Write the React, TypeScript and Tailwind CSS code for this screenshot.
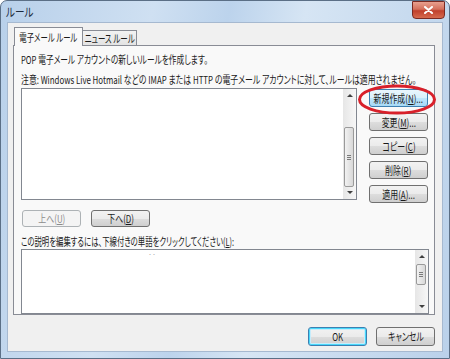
import React from "react";

const font = { fontFamily: '"Meiryo UI", "Noto Sans CJK JP", "Noto Sans", sans-serif' };

// narrow text: Meiryo UI is much narrower than Noto, so squeeze horizontally
function T({ c, children }: { c: string; children: React.ReactNode }) {
  return <span className={`inline-block whitespace-nowrap ${c}`}>{children}</span>;
}

function Btn({
  children,
  className = "",
  variant = "normal",
}: {
  children: React.ReactNode;
  className?: string;
  variant?: "normal" | "hot" | "default" | "disabled";
}) {
  const look =
    variant === "hot"
      ? "border-[#3c7fb1] bg-[linear-gradient(#eaf6fd_0%,#d9f0fc_50%,#bee6fd_51%,#a7d9f5_100%)] text-[#1a1a1a]"
      : variant === "default"
        ? "border-[#3c7fb1] bg-[linear-gradient(#f2f2f2_0%,#ebebeb_50%,#dddddd_51%,#cfcfcf_100%)] shadow-[inset_0_0_0_1px_#48d8fb,inset_0_0_0_2px_#c6ecfb] text-[#1a1a1a]"
        : variant === "disabled"
          ? "border-[#adb2b5] bg-[#f4f4f4] text-[#8c8c8c]"
          : "border-[#707070] bg-[linear-gradient(#f2f2f2_0%,#ebebeb_50%,#dddddd_51%,#cfcfcf_100%)] text-[#1a1a1a]";
  return (
    <div
      className={`flex items-center justify-center whitespace-nowrap rounded-[3px] border text-[11px] leading-none ${look} ${className}`}
    >
      <T c="origin-center scale-x-[0.72]">{children}</T>
    </div>
  );
}

function Acc({ k }: { k: string }) {
  return (
    <>
      (<span className="underline underline-offset-1">{k}</span>)
    </>
  );
}

function ScrollBar({ thumbTop, thumbH }: { thumbTop: number; thumbH: number }) {
  return (
    <div className="relative h-full w-[13px] bg-[linear-gradient(90deg,#e6e6e6,#f7f7f7)]">
      <div className="absolute left-[4px] top-[5px] h-0 w-0 border-x-[3px] border-b-[3px] border-x-transparent border-b-[#404040]" />
      <div
        className="absolute left-[1px] flex w-[10px] flex-col items-center justify-center gap-[1px] rounded-[2px] border border-[#9a9a9a] bg-[linear-gradient(90deg,#f2f2f2,#d8d8d8)]"
        style={{ top: thumbTop, height: thumbH }}
      >
        <div className="h-px w-[4px] bg-[#7a7a7a]" />
        <div className="h-px w-[4px] bg-[#7a7a7a]" />
        <div className="h-px w-[4px] bg-[#7a7a7a]" />
      </div>
      <div className="absolute bottom-[5px] left-[4px] h-0 w-0 border-x-[3px] border-t-[3px] border-x-transparent border-t-[#404040]" />
    </div>
  );
}

export default function App() {
  return (
    <div
      className="relative h-[359px] w-[450px] overflow-hidden rounded-t-[7px] border border-[#5b6f86] bg-[linear-gradient(100deg,#b8d0ea_0%,#cfe0f2_30%,#bcd3ec_45%,#d6e5f4_60%,#bad1ea_100%)] text-[#1a1a1a] [font-feature-settings:'palt']"
      style={font}
    >
      {/* title bar */}
      <div className="flex h-[21px] items-center justify-between">
        <span className="pl-[5px] pt-[1px] text-[12px] text-[#1c2a3c]">
          <T c="origin-left scale-x-[0.8]">ルール</T>
        </span>
        <div className="mr-[4px] flex h-[18px] w-[33px] -translate-y-[2px] items-center justify-center rounded-b-[4px] border border-[#7a2a22] bg-[linear-gradient(#e8a08f_0%,#d4705c_45%,#c0402c_55%,#d66a4e_100%)]">
          <svg width="9" height="8" viewBox="0 0 9 8">
            <path d="M1 1 L8 7 M8 1 L1 7" stroke="#ffffff" strokeWidth="2" strokeLinecap="round" />
          </svg>
        </div>
      </div>

      {/* client */}
      <div className="mx-[6px] flex h-[330px] w-[436px] flex-col border border-[#a6b9d0] bg-[#f0f0f0] pl-[5px] pr-[7px] pt-[4px]">
        {/* tabs */}
        <div className="flex h-[18px] items-end pl-[1px]">
          <div className="relative z-10 -mb-px flex h-[19px] w-[69px] items-center justify-center whitespace-nowrap border border-b-0 border-[#898c95] bg-[#f9f9f9] text-[11px]">
            <T c="origin-center scale-x-[0.67]">電子メール ルール</T>
          </div>
          <div className="flex h-[15px] w-[54px] items-center justify-center whitespace-nowrap border border-b-0 border-l-0 border-[#898c95] bg-[linear-gradient(#f2f2f2,#e3e3e3)] text-[11px]">
            <T c="origin-center scale-x-[0.68]">ニュース ルール</T>
          </div>
        </div>

        {/* panel */}
        <div className="flex h-[270px] flex-col border border-[#898c95] bg-[#f9f9f9] pl-[7px] pr-[6px]">
          <div className="mt-[6px] h-[14px] text-[11px] leading-[14px]">
            <T c="origin-left scale-x-[0.7]">POP 電子メール アカウントの新しいルールを作成します。</T>
          </div>
          <div className="mt-[6px] h-[14px] text-[11px] leading-[14px]">
            <T c="origin-left scale-x-[0.716]">
              注意: Windows Live Hotmail などの IMAP または HTTP の電子メール アカウントに対して、ルールは適用されません。
            </T>
          </div>

          <div className="mt-[2px] flex">
            <div className="flex h-[112px] w-[336px] justify-end border border-[#828790] bg-white">
              <ScrollBar thumbTop={38} thumbH={60} />
            </div>
            <div className="ml-[12px] flex w-[59px] flex-col gap-[6px] pt-px">
              <Btn variant="hot" className="h-[18px]">
                新規作成<Acc k="N" />...
              </Btn>
              <Btn className="h-[18px]">
                変更<Acc k="M" />...
              </Btn>
              <Btn className="h-[18px]">
                コピー<Acc k="C" />
              </Btn>
              <Btn className="h-[18px]">
                削除<Acc k="R" />
              </Btn>
              <Btn className="h-[18px]">
                適用<Acc k="A" />...
              </Btn>
            </div>
          </div>

          <div className="mt-[7px] flex gap-[10px] pl-px">
            <Btn variant="disabled" className="h-[17px] w-[59px]">
              上へ<Acc k="U" />
            </Btn>
            <Btn className="h-[17px] w-[59px]">
              下へ<Acc k="D" />
            </Btn>
          </div>

          <div className="mt-[7px] h-[14px] text-[11px] leading-[14px]">
            <T c="origin-left scale-x-[0.67]">
              この説明を編集するには、下線付きの単語をクリックしてください<Acc k="L" />:
            </T>
          </div>

          <div className="mt-px flex h-[65px] w-[408px] border border-[#828790] bg-white">
            <div className="flex-1 pl-[126px] pt-[1px] text-[8px] leading-none text-[#b0b0b0]">‥</div>
            <ScrollBar thumbTop={14} thumbH={21} />
          </div>
        </div>

        {/* bottom buttons */}
        <div className="mt-[12px] flex justify-end gap-[9px]">
          <Btn variant="default" className="h-[19px] w-[59px]">
            OK
          </Btn>
          <Btn className="h-[19px] w-[59px]">キャンセル</Btn>
        </div>
      </div>

      {/* red annotation ellipse */}
      <svg className="absolute left-[356px] top-[83px]" width="80" height="31" viewBox="0 0 80 31">
        <ellipse cx="40" cy="15.5" rx="37.5" ry="13.5" fill="none" stroke="#d8202a" strokeWidth="3" />
      </svg>
    </div>
  );
}
